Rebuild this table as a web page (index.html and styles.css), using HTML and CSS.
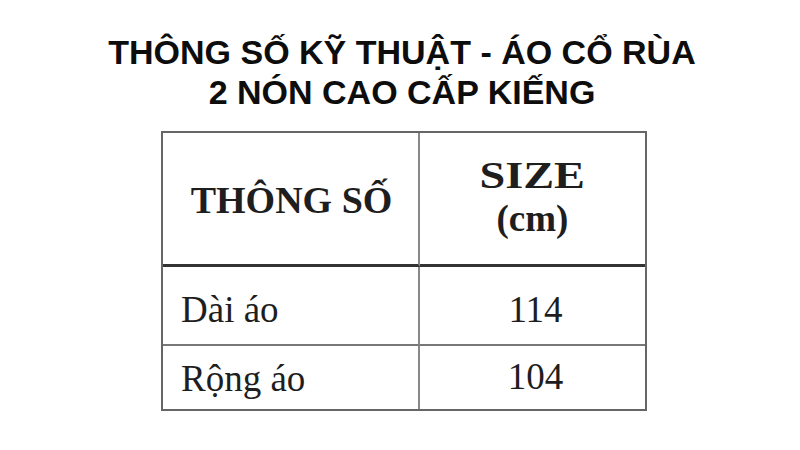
FILE: index.html
```html
<!DOCTYPE html>
<html lang="vi">
<head>
<meta charset="utf-8">
<link rel="stylesheet" href="styles.css">
</head>
<body>
<h1 class="title">THÔNG SỐ KỸ THUẬT - ÁO CỔ RÙA<br>2 NÓN CAO CẤP KIẾNG</h1>
<div class="spec">
  <div class="cell head head-left">THÔNG SỐ</div>
  <div class="cell head head-right"><span class="size">SIZE</span><br>(cm)</div>
  <div class="cell row1 name">Dài áo</div>
  <div class="cell row1 val">114</div>
  <div class="cell row2 name">Rộng áo</div>
  <div class="cell row2 val">104</div>
</div>
</body>
</html>
```
FILE: styles.css
```css
html, body {
  margin: 0;
  padding: 0;
  background: #ffffff;
}
body {
  width: 800px;
  height: 450px;
  overflow: hidden;
}
.title {
  margin: 0;
  padding: 32px 0 0 4px;
  font-family: "Liberation Sans", Arial, sans-serif;
  font-weight: bold;
  font-size: 34px;
  line-height: 40px;
  text-align: center;
  color: #0d0d0d;
}
.spec {
  box-sizing: border-box;
  margin: 19px 0 0 161px;
  width: 486px;
  border: 2px solid #666666;
  display: grid;
  grid-template-columns: 257px 225px;
  grid-template-rows: 134px 79px 63px;
  font-family: "Liberation Serif", "Times New Roman", serif;
  color: #1e1e1e;
}
.cell {
  box-sizing: border-box;
  font-size: 37px;
  line-height: 41px;
}
.head {
  font-weight: bold;
  border-bottom: 3px solid #333333;
  text-align: center;
}
.head-left {
  border-right: 2px solid #888888;
  padding-top: 47px;
  font-size: 38px;
  padding-left: 2px;
}
.head-right {
  line-height: 43px;
  padding-top: 21px;
}
.size {
  display: inline-block;
  transform: scaleX(1.25);
}
.row1 {
  border-bottom: 2px solid #777777;
  padding-top: 22px;
}
.row2 {
  padding-top: 12px;
}
.name {
  border-right: 2px solid #888888;
  padding-left: 18px;
}
.val {
  text-align: center;
  padding-left: 6px;
}
.row2.val {
  padding-top: 10px;
}
```
